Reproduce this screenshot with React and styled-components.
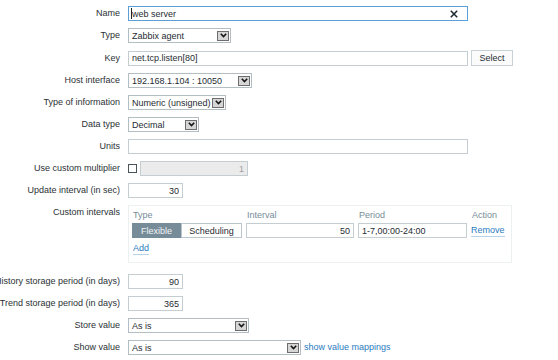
import React from "react";
import styled, { createGlobalStyle } from "styled-components";

const GlobalStyle = createGlobalStyle`
  html, body {
    margin: 0;
    padding: 0;
    background: #fff;
  }

  body {
    font-family: "Liberation Sans", Arial, sans-serif;
    font-size: 9px;
    color: #1f2c33;
    overflow: hidden;
  }
`;

const Form = styled.form`
  display: flex;
  flex-direction: column;
  gap: 7px;
  padding-top: 6px;
  width: 558px;
  height: 360px;
  box-sizing: border-box;
`;

const Row = styled.div`
  display: grid;
  grid-template-columns: 120px auto;
  column-gap: 8px;
  align-items: ${(p) => (p.$top ? "start" : "center")};
  margin-bottom: ${(p) => p.$after || 0}px;
`;

const Label = styled.label`
  display: flex;
  justify-content: flex-end;
  white-space: nowrap;
  line-height: 15px;
  color: #2b3135;

  span {
    flex-shrink: 0;
  }
`;

const Field = styled.div`
  display: flex;
  align-items: center;
  gap: 3px;
`;

const Input = styled.input`
  width: ${(p) => p.$w}px;
  height: 15px;
  box-sizing: border-box;
  border: 1px solid ${(p) => (p.$focus ? "#5c9fd6" : "#c3cdd2")};
  background: ${(p) => (p.disabled ? "#ebebeb" : "#fff")};
  padding: 0 ${(p) => (p.$clear ? 18 : 3)}px 0 3px;
  margin: 0;
  font-family: inherit;
  font-size: 9px;
  color: ${(p) => (p.disabled ? "#a0a0a0" : "#1f2c33")};
  text-align: ${(p) => (p.$num ? "right" : "left")};
  outline: none;
`;

const InputWrap = styled.div`
  position: relative;
  display: flex;
`;

const ClearIcon = styled.svg`
  position: absolute;
  right: 10px;
  top: 4px;
`;

const Caret = styled.span`
  position: absolute;
  left: 3px;
  top: 2px;
  width: 1px;
  height: 11px;
  background: #222;
`;

const SelectBox = styled.div`
  width: ${(p) => p.$w}px;
  height: 15px;
  box-sizing: border-box;
  border: 1px solid #b3bec4;
  background: #fff;
  display: flex;
  align-items: center;
  justify-content: space-between;
  padding: 0 1px 0 3px;
  white-space: nowrap;
  color: #1f2c33;
`;

const Arrow = styled.span`
  width: 12px;
  height: 10px;
  box-sizing: border-box;
  border: 1px solid #6d6d6d;
  background: #d6d6d6;
  display: flex;
  align-items: center;
  justify-content: center;
  flex-shrink: 0;
`;

const Button = styled.button`
  height: 16px;
  width: 42px;
  box-sizing: border-box;
  border: 1px solid #c8d1d6;
  background: #fbfbfb;
  font-family: inherit;
  font-size: 9px;
  color: #1f2c33;
  padding: 0;
`;

const Checkbox = styled.span`
  width: 9px;
  height: 9px;
  box-sizing: border-box;
  border: 1px solid #4a5358;
  background: #fff;
  margin-right: 0;
`;

const Link = styled.a`
  color: #2b7bbf;
  text-decoration: none;
  white-space: nowrap;
  border-bottom: ${(p) => (p.$line ? "1px solid #b5d3ea" : "none")};
  line-height: 11px;
`;

const IntervalBox = styled.div`
  width: 384px;
  height: 58px;
  box-sizing: border-box;
  border: 1px solid #edf0f1;
  padding: 3px 6px 0 3px;
  display: grid;
  grid-template-columns: 110px 108px 109px auto;
  grid-template-rows: 11px 15px 16px;
  column-gap: 4px;
  row-gap: 3px;
  align-items: center;
`;

const Head = styled.span`
  color: #768d99;
  padding-left: 1px;
`;

const Segmented = styled.div`
  display: flex;
  height: 15px;
`;

const Segment = styled.span`
  width: ${(p) => p.$w}px;
  box-sizing: border-box;
  display: flex;
  align-items: center;
  justify-content: center;
  border: 1px solid ${(p) => (p.$on ? "#768d99" : "#b9c5cb")};
  background: ${(p) => (p.$on ? "#768d99" : "#fff")};
  color: ${(p) => (p.$on ? "#f2f4f5" : "#1f2c33")};
`;

const AddCell = styled.div`
  grid-column: 1 / 2;
  display: flex;
  align-items: center;
  padding-left: 1px;
`;

const Chevron = () => (
  <svg width="7" height="5" viewBox="0 0 7 5">
    <path d="M0.8 0.8 L3.5 3.6 L6.2 0.8" fill="none" stroke="#111" strokeWidth="1.5" />
  </svg>
);

const Select = ({ w, value }) => (
  <SelectBox $w={w}>
    <span>{value}</span>
    <Arrow>
      <Chevron />
    </Arrow>
  </SelectBox>
);

const FormRow = ({ label, children, top, after }) => (
  <Row $top={top} $after={after}>
    <Label>
      <span>{label}</span>
    </Label>
    <Field>{children}</Field>
  </Row>
);

const App = () => {
  return (
    <>
      <GlobalStyle />
      <Form>
        <FormRow label="Name">
          <InputWrap>
            <Input $w={340} $focus $clear defaultValue="web server" />
            <Caret />
            <ClearIcon width="8" height="8" viewBox="0 0 8 8">
              <path d="M0.8 0.8 L7.2 7.2 M7.2 0.8 L0.8 7.2" stroke="#1f2c33" strokeWidth="1.6" />
            </ClearIcon>
          </InputWrap>
        </FormRow>
        <FormRow label="Type">
          <Select w={103} value="Zabbix agent" />
        </FormRow>
        <FormRow label="Key">
          <Input $w={340} defaultValue="net.tcp.listen[80]" />
          <Button type="button">Select</Button>
        </FormRow>
        <FormRow label="Host interface">
          <Select w={124} value="192.168.1.104 : 10050" />
        </FormRow>
        <FormRow label="Type of information">
          <Select w={98} value="Numeric (unsigned)" />
        </FormRow>
        <FormRow label="Data type">
          <Select w={71} value="Decimal" />
        </FormRow>
        <FormRow label="Units">
          <Input $w={340} defaultValue="" />
        </FormRow>
        <FormRow label="Use custom multiplier">
          <Checkbox />
          <Input $w={108} $num disabled defaultValue="1" />
        </FormRow>
        <FormRow label="Update interval (in sec)">
          <Input $w={55} $num defaultValue="30" />
        </FormRow>
        <FormRow label="Custom intervals" top after={4}>
          <IntervalBox>
            <Head>Type</Head>
            <Head>Interval</Head>
            <Head>Period</Head>
            <Head>Action</Head>
            <Segmented>
              <Segment $w={49} $on>Flexible</Segment>
              <Segment $w={61}>Scheduling</Segment>
            </Segmented>
            <Input $w={108} $num defaultValue="50" />
            <Input $w={109} defaultValue="1-7,00:00-24:00" />
            <Link href="#" $line>Remove</Link>
            <AddCell>
              <Link href="#" $line>Add</Link>
            </AddCell>
          </IntervalBox>
        </FormRow>
        <FormRow label="History storage period (in days)">
          <Input $w={55} $num defaultValue="90" />
        </FormRow>
        <FormRow label="Trend storage period (in days)">
          <Input $w={55} $num defaultValue="365" />
        </FormRow>
        <FormRow label="Store value">
          <Select w={121} value="As is" />
        </FormRow>
        <FormRow label="Show value">
          <Select w={173} value="As is" />
          <Link href="#">show value mappings</Link>
        </FormRow>
      </Form>
    </>
  );
};

export default App;
